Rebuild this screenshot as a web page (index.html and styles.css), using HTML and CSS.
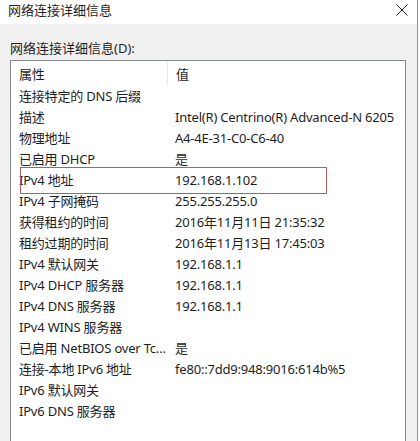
FILE: index.html
```html
<!DOCTYPE html>
<html lang="zh-CN">
<head>
    <meta charset="UTF-8">
    <title>网络连接详细信息</title>
    <link rel="stylesheet" href="styles.css">
</head>
<body>
    <div class="window">
        <!-- 标题栏 -->
        <div class="titlebar">
            <span class="title">网络连接详细信息</span>
            <svg class="close" width="12" height="12" viewBox="0 0 12 12">
                <path d="M0.5 0.5 L11.5 11.5 M11.5 0.5 L0.5 11.5" stroke="#222" stroke-width="1" fill="none"/>
            </svg>
        </div>

        <div class="content">
            <div class="caption">网络连接详细信息(D):</div>
            <div class="listbox">
                <div class="row header">
                    <span class="key">属性</span>
                    <span class="val">值</span>
                </div>
                <div class="row"><span class="key">连接特定的 DNS 后缀</span><span class="val"></span></div>
                <div class="row"><span class="key">描述</span><span class="val">Intel(R) Centrino(R) Advanced-N 6205</span></div>
                <div class="row"><span class="key">物理地址</span><span class="val">A4-4E-31-C0-C6-40</span></div>
                <div class="row"><span class="key">已启用 DHCP</span><span class="val">是</span></div>
                <div class="row marked"><span class="key">IPv4 地址</span><span class="val">192.168.1.102</span><span class="mark"></span></div>
                <div class="row"><span class="key">IPv4 子网掩码</span><span class="val">255.255.255.0</span></div>
                <div class="row"><span class="key">获得租约的时间</span><span class="val">2016年11月11日 21:35:32</span></div>
                <div class="row"><span class="key">租约过期的时间</span><span class="val">2016年11月13日 17:45:03</span></div>
                <div class="row"><span class="key">IPv4 默认网关</span><span class="val">192.168.1.1</span></div>
                <div class="row"><span class="key">IPv4 DHCP 服务器</span><span class="val">192.168.1.1</span></div>
                <div class="row"><span class="key">IPv4 DNS 服务器</span><span class="val">192.168.1.1</span></div>
                <div class="row"><span class="key">IPv4 WINS 服务器</span><span class="val"></span></div>
                <div class="row"><span class="key">已启用 NetBIOS over Tc...</span><span class="val">是</span></div>
                <div class="row"><span class="key">连接-本地 IPv6 地址</span><span class="val">fe80::7dd9:948:9016:614b%5</span></div>
                <div class="row"><span class="key">IPv6 默认网关</span><span class="val"></span></div>
                <div class="row"><span class="key">IPv6 DNS 服务器</span><span class="val"></span></div>
            </div>
        </div>
    </div>
</body>
</html>
```

FILE: styles.css
```css
html, body {
    margin: 0;
    padding: 0;
    height: 100%;
    overflow: hidden;
    background: #fff;
}
body {
    font-family: "Noto Sans", "Noto Sans CJK SC", sans-serif;
    font-size: 13px;
    color: #1e1e1e;
}
.window {
    width: 417px;
    height: 100%;
    border-right: 1px solid #6b9fbd;
    display: flex;
    flex-direction: column;
}
.titlebar {
    height: 24px;
    background: #fff;
    display: flex;
    align-items: center;
    justify-content: space-between;
    padding: 0 9px 6px 8px;
    box-sizing: border-box;
}
.close {
    margin-top: 2px;
}
.content {
    flex: 1;
    background: #f0f0f0;
    padding: 15px 11px 0 10px;
    display: flex;
    flex-direction: column;
}
.caption {
    line-height: 18px;
    margin-bottom: 3px;
}
.listbox {
    flex: 1;
    background: #fff;
    border: 1px solid #828790;
    border-bottom: none;
}
.row {
    position: relative;
    display: flex;
    height: 21px;
    align-items: center;
    padding-left: 8px;
    white-space: nowrap;
    letter-spacing: -0.2px;
}
.row.header {
    height: 24px;
}
.key {
    width: 156px;
    overflow: hidden;
}
.header .key {
    border-right: 1px solid #e8e8e8;
    width: 148px;
    margin-right: 8px;
    height: 100%;
    display: flex;
    align-items: center;
}
.val {
    flex: 1;
}
.mark {
    position: absolute;
    left: 9px;
    top: -2px;
    width: 305px;
    height: 25px;
    border: 1px solid #b55c5c;
}
```
